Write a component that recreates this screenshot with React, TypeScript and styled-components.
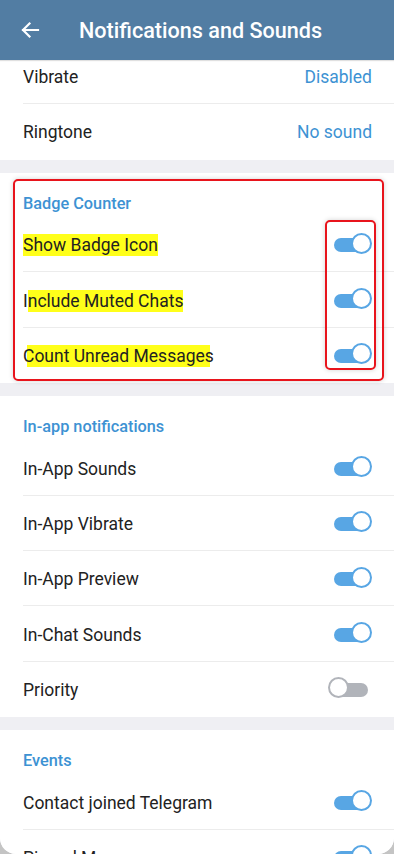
import * as React from 'react';
import styled, { createGlobalStyle } from 'styled-components';

const GlobalStyle = createGlobalStyle`
  html, body {
    margin: 0;
    padding: 0;
    background: #c4c4c4;
  }
  body {
    font-family: Roboto, "Noto Sans", "Liberation Sans", sans-serif;
    -webkit-font-smoothing: antialiased;
  }
`;

const Screen = styled.div`
  width: 394px;
  height: 854px;
  background: #efeff3;
  overflow: hidden;
  border-radius: 0 0 16px 16px;
  display: flex;
  flex-direction: column;
`;

const Toolbar = styled.div`
  height: 60px;
  flex-shrink: 0;
  background: #527da3;
  display: flex;
  align-items: center;
  padding-left: 20px;
  gap: 39px;
  position: relative;
  z-index: 2;
  box-shadow: 0 1px 1px rgba(0, 0, 0, 0.12);
`;

const Title = styled.h1`
  margin: 0;
  color: #fff;
  font-size: 21.6px;
  font-weight: 500;
`;

const Scroller = styled.div`
  flex: 1;
  overflow: hidden;
`;

const List = styled.div`
  margin-top: -11px;
  display: flex;
  flex-direction: column;
  gap: 13.5px;
`;

const Section = styled.div`
  background: #fff;
  position: relative;
`;

const SectionTitle = styled.div`
  height: 44px;
  box-sizing: border-box;
  padding: 21px 23px 0;
  color: #3d92d3;
  font-size: 16.3px;
  font-weight: 500;
  line-height: 20px;
`;

const Row = styled.div<{ $last?: boolean }>`
  height: 55.3px;
  box-sizing: border-box;
  display: flex;
  align-items: center;
  justify-content: space-between;
  padding: 1px 22px 0 23px;
  position: relative;
  &::after {
    content: '';
    display: ${(p) => (p.$last ? 'none' : 'block')};
    position: absolute;
    left: 23px;
    right: 0;
    bottom: 0;
    height: 1px;
    background: #ececec;
  }
`;

const Label = styled.span`
  color: #222;
  font-size: 17.5px;
  line-height: 20px;
`;

const Value = styled.span`
  color: #3d92d3;
  font-size: 17.5px;
`;

const Mark = styled.span<{ $from?: number; $to?: number }>`
  background-image: linear-gradient(#ffff1a, #ffff1a);
  background-repeat: no-repeat;
  background-position: ${(p) => p.$from ?? 0}px 0;
  background-size: calc(100% - ${(p) => (p.$from ?? 0) + (p.$to ?? 0)}px) 100%;
  padding: 1px 0;
`;

const Track = styled.div<{ $on: boolean }>`
  width: 36px;
  height: 14px;
  border-radius: 7px;
  background: ${(p) => (p.$on ? '#58a6e4' : '#b1b4ba')};
  position: relative;
  margin-right: ${(p) => (p.$on ? '2px' : '4px')};
`;

const Thumb = styled.div<{ $on: boolean }>`
  position: absolute;
  top: -5.5px;
  ${(p) => (p.$on ? 'right: -2px;' : 'left: -4px;')}
  width: 21px;
  height: 21px;
  box-sizing: border-box;
  border-radius: 50%;
  background: #fff;
  border: 2px solid ${(p) => (p.$on ? '#58a6e4' : '#b1b4ba')};
`;

const RedFrame = styled.div`
  position: absolute;
  border: 2px solid #e8141c;
  border-radius: 5px;
  box-shadow: 0 0 5px rgba(0, 0, 0, 0.18);
  pointer-events: none;
`;

const OuterFrame = styled(RedFrame)`
  top: 6px;
  left: 13px;
  right: 10px;
  bottom: 2px;
`;

const InnerFrame = styled(RedFrame)`
  top: 47px;
  right: 18px;
  width: 51px;
  height: 150px;
  box-sizing: border-box;
`;

const Toggle = ({ on }: { on: boolean }) => (
  <Track $on={on}>
    <Thumb $on={on} />
  </Track>
);

const BackArrow = () => (
  <svg width="20" height="20" viewBox="0 0 20 20" fill="none">
    <path d="M18 10H3M9.5 3.5L3 10l6.5 6.5" stroke="#fff" strokeWidth="2.2" strokeLinecap="square" />
  </svg>
);

const inApp = [
  { label: 'In-App Sounds', on: true },
  { label: 'In-App Vibrate', on: true },
  { label: 'In-App Preview', on: true },
  { label: 'In-Chat Sounds', on: true },
  { label: 'Priority', on: false },
];

const App: React.FunctionComponent = () => {
  return (
    <>
      <GlobalStyle />
      <Screen>
        <Toolbar>
          <BackArrow />
          <Title>Notifications and Sounds</Title>
        </Toolbar>
        <Scroller>
          <List>
            <Section>
              <Row>
                <Label>Vibrate</Label>
                <Value>Disabled</Value>
              </Row>
              <Row $last>
                <Label>Ringtone</Label>
                <Value>No sound</Value>
              </Row>
            </Section>

            <Section>
              <SectionTitle>Badge Counter</SectionTitle>
              <Row>
                <Label><Mark>Show Badge Icon</Mark></Label>
                <Toggle on />
              </Row>
              <Row>
                <Label><Mark $from={5}>Include Muted Chats</Mark></Label>
                <Toggle on />
              </Row>
              <Row $last>
                <Label><Mark $from={4} $to={4}>Count Unread Messages</Mark></Label>
                <Toggle on />
              </Row>
              <OuterFrame />
              <InnerFrame />
            </Section>

            <Section>
              <SectionTitle>In-app notifications</SectionTitle>
              {inApp.map((item, i) => (
                <Row key={item.label} $last={i === inApp.length - 1}>
                  <Label>{item.label}</Label>
                  <Toggle on={item.on} />
                </Row>
              ))}
            </Section>

            <Section>
              <SectionTitle>Events</SectionTitle>
              <Row>
                <Label>Contact joined Telegram</Label>
                <Toggle on />
              </Row>
              <Row>
                <Label>Pinned Messages</Label>
                <Toggle on />
              </Row>
            </Section>
          </List>
        </Scroller>
      </Screen>
    </>
  );
};

export default App;
